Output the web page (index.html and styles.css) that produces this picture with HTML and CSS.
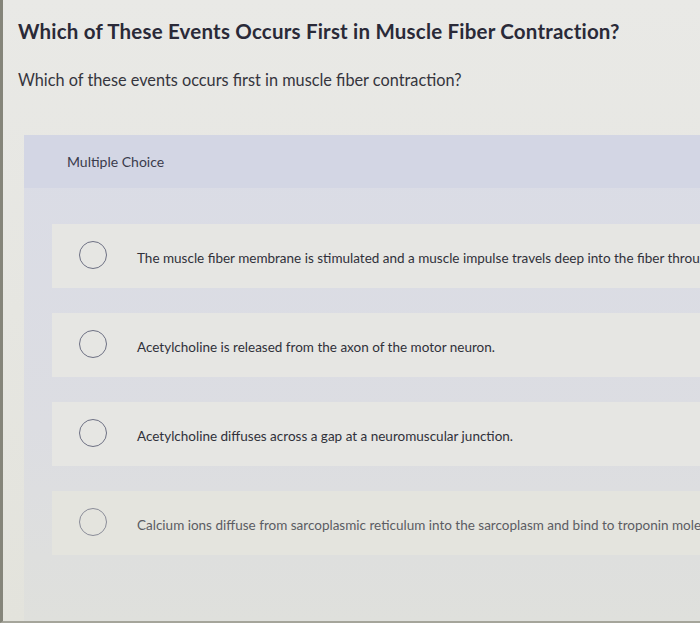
FILE: index.html
```html
<!DOCTYPE html>
<html lang="en">
<head>
<meta charset="utf-8">
<title>Multiple Choice</title>
<link rel="stylesheet" href="styles.css">
</head>
<body>
<div class="frame">
  <h1 class="title">Which of These Events Occurs First in Muscle Fiber Contraction?</h1>
  <p class="prompt">Which of these events occurs first in muscle fiber contraction?</p>
  <section class="panel">
    <div class="panel-head">Multiple Choice</div>
    <ul class="options">
      <li class="option"><span class="radio"></span><span class="label">The muscle fiber membrane is stimulated and a muscle impulse travels deep into the fiber through the transverse tubules.</span></li>
      <li class="option"><span class="radio"></span><span class="label">Acetylcholine is released from the axon of the motor neuron.</span></li>
      <li class="option"><span class="radio"></span><span class="label">Acetylcholine diffuses across a gap at a neuromuscular junction.</span></li>
      <li class="option option-dim"><span class="radio"></span><span class="label">Calcium ions diffuse from sarcoplasmic reticulum into the sarcoplasm and bind to troponin molecules.</span></li>
    </ul>
  </section>
</div>
</body>
</html>
```

FILE: styles.css
```css
* { box-sizing: border-box; }
html, body { margin: 0; padding: 0; }
body {
  width: 700px;
  height: 623px;
  overflow: hidden;
  background: #e6e6e2;
  font-family: Lato, "Open Sans", "Liberation Sans", sans-serif;
}
.frame {
  height: 623px;
  border-left: 3px solid #85857a;
  border-bottom: 2px solid #a5a59b;
  background: linear-gradient(180deg, #e9e9e6 0%, #e6e6e1 50%, #e3e3dc 100%);
  overflow: hidden;
  display: flex;
  flex-direction: column;
}
.title {
  margin: 19px 0 0 15px;
  font-size: 20.5px;
  letter-spacing: 0.2px;
  line-height: 24px;
  font-weight: 700;
  color: #2a2a38;
  white-space: nowrap;
}
.prompt {
  margin: 27px 0 0 15px;
  font-size: 16.3px;
  line-height: 20px;
  color: #35353d;
  white-space: nowrap;
}
.panel {
  margin: 45px 0 0 21px;
  flex: 1;
  background: linear-gradient(180deg, #dadce6 0%, #dcdde2 60%, #dfe0dc 100%);
}
.panel-head {
  height: 53px;
  padding-left: 43px;
  display: flex;
  align-items: center;
  background: #d3d6e4;
  font-size: 14px;
  color: #3a3b4c;
}
.options {
  list-style: none;
  margin: 0;
  padding: 36px 0 0 28px;
  display: flex;
  flex-direction: column;
  gap: 25px;
}
.option {
  height: 64px;
  display: flex;
  align-items: center;
  background: #e6e6e3;
  white-space: nowrap;
  overflow: hidden;
}
.radio {
  flex: none;
  width: 28px;
  height: 28px;
  margin-left: 27px;
  margin-right: 30px;
  border: 1.6px solid #6d7083;
  border-radius: 50%;
  position: relative;
  top: -1px;
}
.label {
  font-size: 13.5px;
  color: #30313a;
  position: relative;
  top: 2px;
}
.option-dim { background: #e4e4de; }
.option-dim .label { color: #5b5c63; }
.option-dim .radio { border-color: #8a8c98; }
```
